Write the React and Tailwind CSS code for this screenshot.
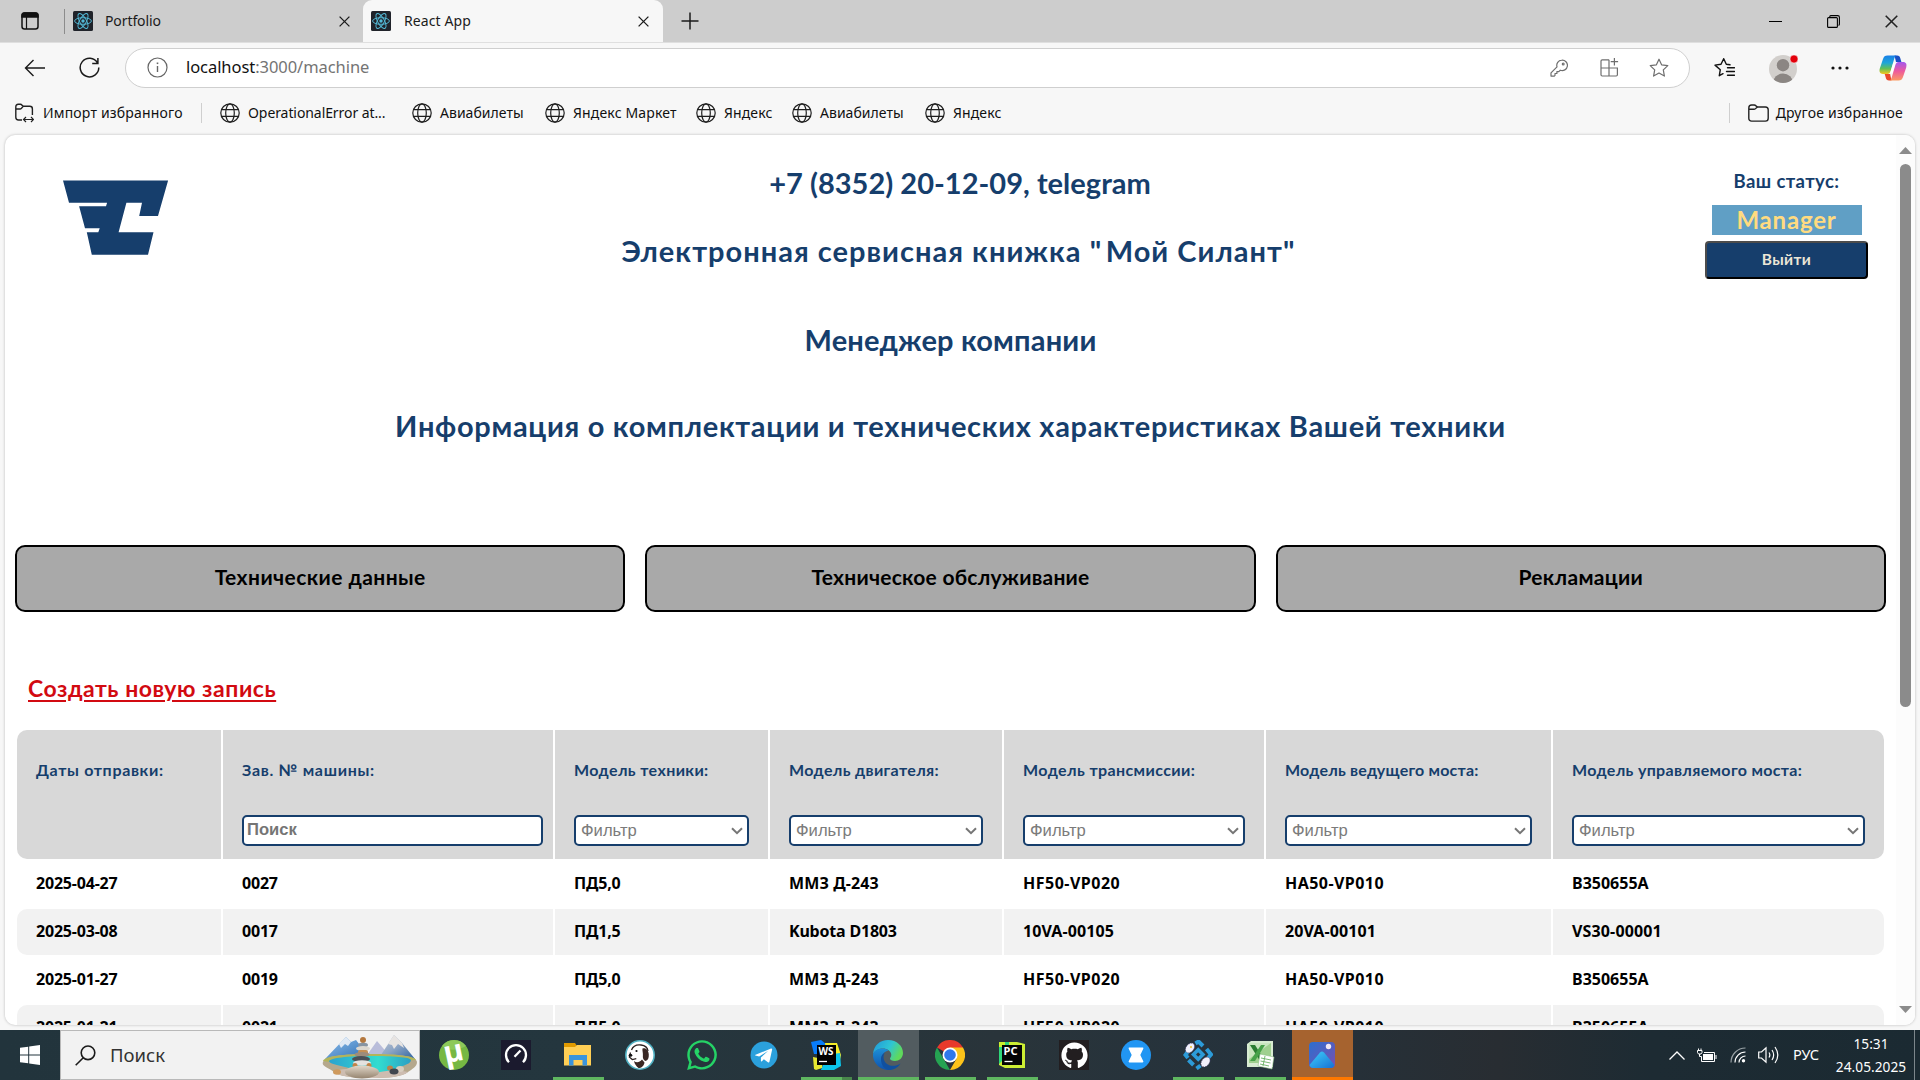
import React from 'react';
import { FaWhatsapp, FaGithub } from 'react-icons/fa';

/* ---------- browser chrome icons ---------- */

function ReactMark() {
  return (
    <svg width="20" height="20" viewBox="0 0 20 20" className="shrink-0">
      <rect width="20" height="20" rx="1.5" fill="#20232a" />
      <g fill="none" stroke="#53b9d6" strokeWidth="0.95">
        <ellipse cx="10" cy="10" rx="8.4" ry="3.3" />
        <ellipse cx="10" cy="10" rx="8.4" ry="3.3" transform="rotate(60 10 10)" />
        <ellipse cx="10" cy="10" rx="8.4" ry="3.3" transform="rotate(120 10 10)" />
      </g>
      <circle cx="10" cy="10" r="1.7" fill="#53b9d6" />
    </svg>
  );
}

function Globe() {
  return (
    <svg width="20" height="20" viewBox="0 0 20 20" className="shrink-0" fill="none" stroke="#1f1f1f" strokeWidth="1.2">
      <circle cx="10" cy="10" r="9.2" />
      <ellipse cx="10" cy="10" rx="4.3" ry="9.2" />
      <path d="M1.6 6.7h16.8M1.6 13.3h16.8" />
    </svg>
  );
}

function Cross({ size = 11, color = '#1b1b1b' }) {
  return (
    <svg width={size} height={size} viewBox="0 0 11 11" className="shrink-0" stroke={color} strokeWidth="1.3">
      <path d="M.6.6l9.8 9.8M10.4.6L.6 10.4" />
    </svg>
  );
}

function Star() {
  return (
    <svg width="20" height="20" viewBox="0 0 20 20" className="shrink-0" fill="none" stroke="#6e6e6e" strokeWidth="1.2" strokeLinejoin="round">
      <path d="M10 1.2l2.6 5.6 6.2.8-4.5 4.3 1.1 6.2L10 15.1l-5.4 3 1.1-6.2L1.2 7.6l6.2-.8z" />
    </svg>
  );
}

function Copilot() {
  return (
    <svg width="28" height="26" viewBox="0 0 28 26" className="shrink-0">
      <defs>
        <linearGradient id="cpA" x1="0" y1="0" x2="0" y2="1">
          <stop offset="0" stopColor="#1a7fe8" />
          <stop offset=".4" stopColor="#1fa6d8" />
          <stop offset=".7" stopColor="#5fbf5a" />
          <stop offset="1" stopColor="#f5c51c" />
        </linearGradient>
        <linearGradient id="cpB" x1="0" y1="0" x2="0" y2="1">
          <stop offset="0" stopColor="#a257ee" />
          <stop offset=".5" stopColor="#ee5a9c" />
          <stop offset="1" stopColor="#fb9a62" />
        </linearGradient>
      </defs>
      <path d="M15.5.5h2.6c2 0 2.7 1 3.2 2.700l1.100 3.800h-5.400z" fill="#1a4fc4" />
      <path d="M12.500 25.500H10c-2 0-2.700-1-3.200-2.700L5.700 19h5.400z" fill="#e9482c" />
      <path d="M8.500.5h9.300c-1.500.3-2 1.400-2.500 3l-3.500 12c-.6 2.100-1.400 3.500-3.600 3.500H4C.8 19 0 16.600.8 13.600L4 4C4.800 1.600 6 .5 8.500.5z" fill="url(#cpA)" />
      <path d="M19.500 25.500h-9.300c1.500-.3 2-1.400 2.500-3l3.500-12C16.800 8.400 17.600 7 19.800 7H24c3.200 0 4 2.400 3.200 5.400L24 22c-.8 2.400-2 3.500-4.500 3.500z" fill="url(#cpB)" />
      <path d="M14.200 8.200h2.300l-3 9.600h-2.300z" fill="#fff" />
    </svg>
  );
}

function TabStrip() {
  return (
    <div className="flex h-[42px] bg-[#cdcdcd]">
      <div className="flex w-[363px] items-center rounded-br-[9px]">
        <svg width="18" height="18" viewBox="0 0 18 18" className="ml-[21px] shrink-0" fill="none" stroke="#111" strokeWidth="1.500">
          <rect x="1" y="1" width="16" height="16" rx="2.500" />
          <path d="M1 4.200C1 2 2 1 3.500 1h11C16 1 17 2 17 4.200V5H1z" fill="#111" />
          <path d="M5.500 5v12" strokeWidth="1.200" />
        </svg>
        <div className="ml-[25px] h-[25px] w-px bg-[#8c8c8c]" />
        <div className="ml-[8px]"><ReactMark /></div>
        <span className="ml-[12px] flex-1 pb-[2px] text-[14px] tracking-[-0.1px] text-[#1b1b1b]">Portfolio</span>
        <div className="mr-[13px]"><Cross /></div>
      </div>
      <div className="flex w-[300px] items-center rounded-t-[9px] bg-[#f7f7f7]">
        <div className="ml-[8px]"><ReactMark /></div>
        <span className="ml-[13px] flex-1 pb-[2px] text-[14px] tracking-[0.1px] text-[#1b1b1b]">React App</span>
        <div className="mr-[14px]"><Cross /></div>
      </div>
      <div className="flex flex-1 items-center rounded-bl-[9px]">
        <svg width="18" height="18" viewBox="0 0 18 18" className="ml-[18px]" stroke="#1b1b1b" strokeWidth="1.500">
          <path d="M9 .5v17M.5 9h17" />
        </svg>
        <div className="ml-auto mr-[22px] flex items-center gap-[45px]">
          <div className="h-px w-[13px] bg-black" />
          <svg width="13" height="13" viewBox="0 0 13 13" fill="none" stroke="#000" strokeWidth="1.100">
            <rect x=".6" y="2.600" width="9.800" height="9.800" rx="1" />
            <path d="M2.800 2.200V1.600c0-.6.4-1 1-1h7c1 0 1.600.6 1.600 1.600v7c0 .6-.4 1-1 1" />
          </svg>
          <Cross size={13} color="#222" />
        </div>
      </div>
    </div>
  );
}

function Toolbar() {
  return (
    <div className="flex h-[49px] items-center">
      <svg width="22" height="18" viewBox="0 0 22 18" className="ml-[24px]" fill="none" stroke="#1b1b1b" strokeWidth="1.400">
        <path d="M21 9H1.500M9.500 1L1.500 9l8 8" />
      </svg>
      <svg width="21" height="21" viewBox="0 0 21 21" className="ml-[33px]" fill="none" stroke="#1b1b1b" strokeWidth="1.500">
        <path d="M18.500 5.800A9.300 9.300 0 1 0 19.800 10.500M18.900 1v5.600h-5.700" />
      </svg>
      <div className="ml-[25px] flex h-[40px] w-[1565px] items-center rounded-full border border-[#cfcfcf] bg-white">
        <svg width="21" height="21" viewBox="0 0 21 21" className="ml-[21px]" fill="none" stroke="#666" strokeWidth="1.200">
          <circle cx="10.500" cy="10.500" r="9.500" />
          <path d="M10.500 9v6" strokeWidth="1.400" />
          <path d="M10.500 5.500v1.600" strokeWidth="1.600" />
        </svg>
        <span className="ml-[18px] text-[16.5px] tracking-[-0.06px] text-[#747474]"><span className="text-[#111]">localhost</span>:3000/machine</span>
        <div className="ml-auto mr-[20px] flex items-center">
          <svg width="18" height="18" viewBox="0 0 18 18" className="mr-[32px]" fill="none" stroke="#6e6e6e" strokeWidth="1.200" strokeLinejoin="round">
            <path d="M11.700 1.200a5.200 5.200 0 1 1-1.400 10L8.800 12.600H6.900v1.900H5v1.900l-.7.700H1v-3.200l6-6a5.200 5.200 0 0 1 4.700-6.700z" />
            <circle cx="13.200" cy="4.900" r=".9" />
          </svg>
          <svg width="19" height="19" viewBox="0 0 19 19" className="mr-[30px]" fill="none" stroke="#6e6e6e" strokeWidth="1.200">
            <path d="M9 1.800H2.200c-.8 0-1.200.4-1.200 1.200v13.800c0 .8.400 1.200 1.200 1.200h14c.8 0 1.200-.4 1.200-1.200V10H1M9 1.800V18M14.400 0v7.400M10.700 3.700h7.400" />
          </svg>
          <Star />
        </div>
      </div>
      <svg width="21" height="20" viewBox="0 0 21 20" className="ml-[24px]" fill="none" stroke="#111" strokeWidth="1.400" strokeLinejoin="round" strokeLinecap="round">
        <path d="M5.300 18.200l1-6L1 7.600l6-.8L9.700 1.200l2.600 5.600 3.700.5M5.300 18.200L9 16.200M13.500 10.200h7M12.500 14h8M13.500 17.800h7" transform="translate(0 -.5)" />
      </svg>
      <svg width="30" height="30" viewBox="0 0 30 30" className="ml-[34px]">
        <defs><clipPath id="av"><circle cx="14" cy="16" r="14" /></clipPath></defs>
        <circle cx="14" cy="16" r="14" fill="#d2cfcc" />
        <g clipPath="url(#av)" fill="#8b8683">
          <circle cx="14" cy="12.200" r="6.200" />
          <path d="M4 30a10 9.500 0 0 1 20 0z" />
        </g>
        <circle cx="25" cy="6" r="4" fill="#e3000b" stroke="#f7f7f7" strokeWidth=".5" />
      </svg>
      <svg width="18" height="4" viewBox="0 0 18 4" className="ml-[32px]" fill="#111">
        <circle cx="2" cy="2" r="1.600" /><circle cx="9" cy="2" r="1.600" /><circle cx="16" cy="2" r="1.600" />
      </svg>
      <div className="ml-[30px]"><Copilot /></div>
    </div>
  );
}

const bookmarks = [
  { label: 'OperationalError at...', gap: 'w-[192px]', track: 'tracking-[-0.08px]' },
  { label: 'Авиабилеты', gap: 'w-[133px]', track: 'tracking-[0.03px]' },
  { label: 'Яндекс Маркет', gap: 'w-[151px]', track: 'tracking-[0.15px]' },
  { label: 'Яндекс', gap: 'w-[96px]', track: 'tracking-[0.1px]' },
  { label: 'Авиабилеты', gap: 'w-[133px]', track: 'tracking-[0.03px]' },
  { label: 'Яндекс', gap: 'w-[96px]', track: 'tracking-[0.1px]' },
];

function BookmarkBar() {
  return (
    <div className="flex h-[41px] items-center whitespace-nowrap text-[14px] text-[#111]">
      <svg width="19" height="20" viewBox="0 0 19 20" className="ml-[15px]" fill="none" stroke="#222" strokeWidth="1.400">
        <path d="M7 17H3.500C1.800 17 .8 16 .8 14.300V4C.8 2.300 1.600 1.300 3.300 1.300h2.200c1.400 0 1.700 2 3.100 2h6.200c1.700 0 2.600.9 2.600 2.600V12M.8 6h4.400c1.800 0 1.800-2.400 3.400-2.700" />
        <path d="M9 16.500h9.200M11 14l-2.500 2.500L11 19M16 14l2.500 2.500L16 19" strokeWidth="1.200" />
      </svg>
      <span className="ml-[9px] w-[158px] tracking-[0.18px]">Импорт избранного</span>
      <div className="h-[20px] w-px bg-[#cfcfcf]" />
      <div className="ml-[18px] flex">
        {bookmarks.map((b, i) => (
          <div key={i} className={`flex items-center ${b.gap}`}>
            <Globe />
            <span className={`ml-[8px] ${b.track}`}>{b.label}</span>
          </div>
        ))}
      </div>
      <div className="ml-auto h-[20px] w-px bg-[#cfcfcf]" />
      <svg width="21" height="18" viewBox="0 0 21 18" className="ml-[18px]" fill="none" stroke="#222" strokeWidth="1.400">
        <path d="M.8 4C.8 2 1.800 1 3.600 1h2.600c1.800 0 2 2 3.600 2h7.600c1.800 0 2.800 1 2.800 2.800v8.400c0 1.800-1 2.900-2.800 2.900H3.600c-1.800 0-2.800-1.100-2.800-2.900zM.8 5.300h5.400c1.700 0 2-2.100 3.600-2.300" />
      </svg>
      <span className="ml-[7px] mr-[17px] tracking-[0.18px]">Другое избранное</span>
    </div>
  );
}

/* ---------- page ---------- */

function CompanyLogo() {
  return (
    <svg width="106" height="75" viewBox="0 0 106 75" className="ml-[58px] mt-[45px]">
      <path
        fill="#163e6c"
        d="M0 .4H105.100L95 36H76.200L79 22.700H63.400L55.600 52.300H90.500L85 74.700H28.800L23.800 52.300H35.300L36.700 48.300H22L16.100 26.300H43L44.100 22.700H6z"
      />
    </svg>
  );
}

function PageHeader() {
  return (
    <header className="grid h-[165px] grid-cols-[1fr_690px_1fr] text-[#163e6c]">
      <CompanyLogo />
      <div className="-mr-[8px] ml-[8px] whitespace-nowrap pt-[30px] text-center text-[29px] font-bold leading-[36px]">
        <p className="ml-[3px] tracking-[0.02px]">+7 (8352) 20-12-09, telegram</p>
        <p className="mt-[32px] tracking-[1.02px]">Электронная сервисная книжка <span className="tracking-[4.6px]">"</span>Мой Силант"</p>
      </div>
      <div className="ml-auto mr-[28px] mt-[31px] flex w-[163px] flex-col items-center font-bold">
        <span className="text-[18.500px] leading-[30px] tracking-[0.4px]">Ваш статус:</span>
        <span className="mt-[9px] h-[30px] w-[150px] bg-[#609fc5] text-center text-[24px] leading-[30px] tracking-[0.8px] text-[#ffdb80]">Manager</span>
        <button className="mt-[6px] h-[38px] w-full rounded-[4px] border-2 border-b-black border-l-[#4c4c4c] border-r-black border-t-[#4c4c4c] bg-[#163e6c] text-[15.500px] tracking-[0.4px] text-[#ebe6d6]">Выйти</button>
      </div>
    </header>
  );
}

const tabs = [
  ['Технические данные', 'tracking-[0.43px]'],
  ['Техническое обслуживание', 'tracking-[0.24px]'],
  ['Рекламации', 'tracking-[0.3px]'],
];

const columns = [
  { title: 'Даты отправки:', control: null, track: 'tracking-[0.66px]' },
  { title: 'Зав. № машины:', control: 'search', track: 'tracking-[0.7px]' },
  { title: 'Модель техники:', control: 'filter', track: 'tracking-[0.38px]' },
  { title: 'Модель двигателя:', control: 'filter', track: 'tracking-[0.35px]' },
  { title: 'Модель трансмиссии:', control: 'filter', track: 'tracking-[0.4px]' },
  { title: 'Модель ведущего моста:', control: 'filter', track: 'tracking-[0.2px]' },
  { title: 'Модель управляемого моста:', control: 'filter', track: 'tracking-[0.33px]' },
];

const rows = [
  ['2025-04-27', '0027', 'ПД5,0', 'ММЗ Д-243', 'HF50-VP020', 'HA50-VP010', 'B350655A'],
  ['2025-03-08', '0017', 'ПД1,5', 'Kubota D1803', '10VA-00105', '20VA-00101', 'VS30-00001'],
  ['2025-01-27', '0019', 'ПД5,0', 'ММЗ Д-243', 'HF50-VP020', 'HA50-VP010', 'B350655A'],
  ['2025-01-21', '0021', 'ПД5,0', 'ММЗ Д-243', 'HF50-VP020', 'HA50-VP010', 'B350655A'],
];

const cellTrack = {
  'ММЗ Д-243': 'tracking-[0.12px]',
  'Kubota D1803': 'tracking-[-0.2px]',
  'HF50-VP020': 'tracking-[0.5px]',
  'HA50-VP010': 'tracking-[0.45px]',
  '10VA-00105': 'tracking-[0.1px]',
  '20VA-00101': 'tracking-[0.1px]',
  'VS30-00001': 'tracking-[0.15px]',
  B350655A: 'tracking-[0px]',
};

const gridCols = 'grid grid-cols-[204px_330px_213px_232px_260px_285px_331px] gap-x-[2px]';

function Filter() {
  return (
    <div className="mr-[19px] flex h-[31px] items-center justify-between rounded-[5px] border-2 border-[#163e6c] bg-white pl-[5px] pr-[4px] font-['Liberation_Sans',Arial,sans-serif] text-[16.600px] text-[#7b7b7b]">
      <span className="leading-[20px]">Фильтр</span>
      <svg width="12" height="8" viewBox="0 0 12 8" fill="none" stroke="#767676" strokeWidth="2">
        <path d="M1 1.200l5 5 5-5" />
      </svg>
    </div>
  );
}

function MachineTable() {
  return (
    <div className="ml-[12px] mt-[27px] w-[1867px] font-bold">
      <div className={`${gridCols} h-[129px] overflow-hidden rounded-[10px]`}>
        {columns.map((c) => (
          <div key={c.title} className="whitespace-nowrap bg-[#d8d8d8] pl-[19px] pt-[29px]">
            <div className={`h-[56px] text-[16px] leading-[22px] text-[#163e6c] ${c.track}`}>{c.title}</div>
            {c.control === 'search' && (
              <div className="mr-[10px] h-[31px] rounded-[5px] border-2 border-[#163e6c] bg-white pl-[3px] font-['Liberation_Sans',Arial,sans-serif] text-[16.600px] leading-[25px] text-[#757575]">Поиск</div>
            )}
            {c.control === 'filter' && <div className="font-normal"><Filter /></div>}
          </div>
        ))}
      </div>
      {rows.map((r, i) => (
        <div key={i} className={`${gridCols} mt-[2px] h-[46px] overflow-hidden rounded-[10px]`}>
          {r.map((v, j) => (
            <div
              key={j}
              className={`whitespace-nowrap pl-[19px] font-['Noto_Sans',sans-serif] text-[16px] leading-[44px] text-black ${cellTrack[v] || 'tracking-[-0.2px]'} ${i % 2 ? 'bg-[#f2f2f2]' : 'bg-white'}`}
            >
              {v}
            </div>
          ))}
        </div>
      ))}
    </div>
  );
}

function Page() {
  return (
    <div className="mx-[5px] flex h-[890px] overflow-hidden rounded-[10px] bg-white shadow-[0_0_3px_rgba(0,0,0,0.25)]">
      <main className="w-[1891px] overflow-hidden font-['Lato','Noto_Sans',sans-serif]">
        <PageHeader />
        <h2 className="mt-[22px] text-center text-[29px] font-bold leading-[36px] tracking-[0.17px] text-[#163e6c]">Менеджер компании</h2>
        <h2 className="mt-[50px] text-center text-[29px] font-bold leading-[36px] tracking-[0.69px] text-[#163e6c]">Информация о комплектации и технических характеристиках Вашей техники</h2>
        <nav className="ml-[10px] mt-[101px] grid h-[67px] w-[1871px] grid-cols-3 gap-[20px]">
          {tabs.map(([label, track]) => (
            <button key={label} className={`rounded-[10px] border-2 border-black bg-[#a9a9a9] pb-[3px] text-[21px] font-bold text-black ${track}`}>{label}</button>
          ))}
        </nav>
        <a className="ml-[23px] mt-[61px] block w-fit text-[23px] font-bold leading-[30px] tracking-[0.54px] text-[#d20a11] underline decoration-2 underline-offset-[3px]">Создать новую запись</a>
        <MachineTable />
      </main>
      <div className="flex w-[19px] flex-col items-center bg-[#fcfcfc] pb-[12px] pr-[1px] pt-[12px]">
        <svg width="13" height="7" viewBox="0 0 13 7" fill="#8b8b8b"><path d="M6.500 0L13 7H0z" /></svg>
        <div className="mt-[10px] h-[543px] w-[11px] rounded-full bg-[#8b8b8b]" />
        <svg width="13" height="7" viewBox="0 0 13 7" fill="#8b8b8b" className="mt-auto"><path d="M0 0h13L6.500 7z" /></svg>
      </div>
    </div>
  );
}

/* ---------- taskbar ---------- */

function SearchArt() {
  return (
    <svg width="96" height="45" viewBox="0 0 96 45" className="ml-auto mr-px mt-[3px]">
      <defs>
        <linearGradient id="mtn" x1="0" y1="0" x2="1" y2="1"><stop offset="0" stopColor="#8fc0ec" /><stop offset="1" stopColor="#2d6db4" /></linearGradient>
        <linearGradient id="mtn2" x1="0" y1="0" x2="1" y2="1"><stop offset="0" stopColor="#c8ccd6" /><stop offset=".5" stopColor="#8ca4c4" /><stop offset="1" stopColor="#2b62a0" /></linearGradient>
        <linearGradient id="lake" x1="0" y1="0" x2="1" y2="0"><stop offset="0" stopColor="#2ba3cf" /><stop offset=".6" stopColor="#33dccf" /><stop offset="1" stopColor="#2c9fc4" /></linearGradient>
        <linearGradient id="stone" x1="0" y1="0" x2="0" y2="1"><stop offset="0" stopColor="#e2d8ca" /><stop offset="1" stopColor="#95846f" /></linearGradient>
      </defs>
      <path d="M45 21l10-14 12 14z" fill="#b9bdda" />
      <path d="M3 25L24 3l5 5 5-2 14 18z" fill="url(#mtn)" />
      <path d="M17 10l7-7 5 5-3 4-3-2-4 4z" fill="#dfe9f5" />
      <path d="M57 24L72 1l8 8 13 16z" fill="url(#mtn2)" />
      <path d="M66 10l6-9 8 8 2 5-6-4-4 5-2-4z" fill="#e7e4e2" />
      <path d="M1 28c2-6 20-8 47-8s47 2 47 8c0 5-5 7-9 10-6 5-20 6-38 6S17 42 12 38C7 34-1 32 1 28z" fill="#b5a88d" />
      <path d="M1 27c2-5 20-7 47-7s45 2 46 6c-9 1-18 0-40 0S14 30 1 27z" fill="#b2b45a" />
      <path d="M7 27c2-3 18-5 41-5s40 1 41 4c0 5-12 6-19 11-10 4-30 3-38-1C25 32 7 31 7 27z" fill="url(#lake)" />
      <path d="M12 38c6-3 12-4 20-2l18 4c12-3 20-5 36-2-6 5-20 6-38 6s-31-2-36-6z" fill="#cdbcb0" />
      <circle cx="41" cy="6" r="3" fill="#b4783e" />
      <ellipse cx="41" cy="11" rx="5" ry="2.200" fill="#8794a2" />
      <ellipse cx="41" cy="14.500" rx="7" ry="2.600" fill="#dcd7cf" />
      <rect x="36" y="16" width="10" height="5" rx="2" fill="#c58f55" />
      <ellipse cx="40" cy="20.500" rx="7.500" ry="2.500" fill="#9d8c7c" />
      <ellipse cx="39" cy="25" rx="9" ry="3" fill="#4b5057" />
      <ellipse cx="40" cy="29" rx="9" ry="2.800" fill="#e4e2df" />
      <circle cx="33" cy="31.500" r="2.500" fill="#c18348" /><circle cx="47" cy="31.500" r="2.500" fill="#c18348" />
      <ellipse cx="40" cy="38" rx="17" ry="6.500" fill="url(#stone)" />
      <ellipse cx="15" cy="38" rx="4" ry="2.800" fill="#cf9a5d" />
      <ellipse cx="68" cy="34" rx="3" ry="2.500" fill="#b9824c" /><ellipse cx="78" cy="35" rx="4" ry="3" fill="#d8cdbf" /><ellipse cx="72" cy="37.500" rx="4.500" ry="3" fill="#41464f" />
    </svg>
  );
}

const Svg = ({ children }) => <svg width="30" height="30" viewBox="0 0 30 30">{children}</svg>;

const UTorrent = () => (
  <Svg>
    <circle cx="15" cy="15" r="15" fill="#76b843" />
    <path d="M3 6a15 15 0 0 1 24 0C20 10 10 12 3 6z" fill="#8dc95a" />
    <text x="15" y="21.500" fontSize="30" fontWeight="700" fill="#fff" textAnchor="middle" fontFamily="Noto Sans, sans-serif" transform="rotate(-12 15 15)">µ</text>
  </Svg>
);
const Speed = () => (
  <Svg>
    <rect width="30" height="30" fill="#1b1a2e" />
    <path d="M8 22.200a10 10 0 1 1 14 0" fill="none" stroke="#fff" strokeWidth="2.300" />
    <path d="M13.500 16.700l6-6.200" stroke="#fff" strokeWidth="2.300" />
  </Svg>
);
const Explorer = () => (
  <Svg>
    <path d="M1 3h11l2 3v4H1z" fill="#e09a00" />
    <path d="M1 7h11l2-2h14v20.500H1z" fill="#ffcf55" />
    <path d="M6 15h18v10.500h-4.500V20h-9v5.500H6z" fill="#3a94dc" />
  </Svg>
);
const Dog = () => (
  <Svg>
    <circle cx="15" cy="15" r="14.200" fill="#fff" stroke="#4fb0c2" strokeWidth="1.600" />
    <path d="M6.500 10C8 6 12 4.500 16 5s6.500 2.500 7 6" fill="none" stroke="#2b2120" strokeWidth="1.300" />
    <path d="M17.500 8.500c3.500-1 6 2 6.300 6 .2 3.500-1 6-3.300 6.500-2-.5-3-3-2.600-6 .2-2.500-.8-4.500-.4-6.500z" fill="#3a2723" />
    <path d="M9 21c2.500 2 5.500 1.500 8-1.500l2.500 3C19 26 16.500 28 13.500 28 11.500 26.500 9.500 24 9 21z" fill="#3a2723" />
    <path d="M5.500 12.500L4.300 17l3 2.500 4-.8" fill="none" stroke="#2b2120" strokeWidth="1.200" />
    <ellipse cx="5.500" cy="15.300" rx="1.800" ry="1.500" fill="#111" /><circle cx="11.500" cy="11" r="1.100" fill="#111" />
  </Svg>
);
const Telegram = () => (
  <Svg>
    <circle cx="15" cy="15" r="13.500" fill="#2ba0dc" />
    <path d="M6 15l16-6.500c.8-.2 1.300.3 1.100 1.200L20.500 21.500c-.2 1-.8 1.200-1.600.7l-4-3-2 2c-.5.500-1 .3-1-.4v-3.200l7.300-6.800-9 5.700L6.300 15.400z" fill="#fff" />
  </Svg>
);
const WebStorm = () => (
  <Svg>
    <path d="M0 2l10-2 5 4v10H3z" fill="#087cfa" />
    <path d="M14 3h12l4 12-2 10-12-5z" fill="#f5ec27" />
    <path d="M16 15l13-2 1 13-7 4H10z" fill="#0cc5ea" />
    <path d="M2 17l10 2-1 9-6 2-2-1z" fill="#e6e831" />
    <rect x="6" y="5" width="19" height="20" fill="#000" />
    <text x="7.500" y="15" fontSize="10" fontWeight="700" fill="#fff" fontFamily="Noto Sans, sans-serif" textLength="15" lengthAdjust="spacingAndGlyphs">WS</text>
    <path d="M8 21.500h8" stroke="#fff" strokeWidth="1.300" />
  </Svg>
);
const Edge = () => (
  <Svg>
    <defs>
      <linearGradient id="edA" x1="0" y1="0" x2="1" y2=".4"><stop offset="0" stopColor="#1f97dc" /><stop offset=".6" stopColor="#2fc5d3" /><stop offset="1" stopColor="#5fd95c" /></linearGradient>
      <linearGradient id="edB" x1="0" y1="0" x2="0" y2="1"><stop offset="0" stopColor="#1d8fd8" /><stop offset="1" stopColor="#0f52ac" /></linearGradient>
    </defs>
    <path d="M0 14C1 5 7 0 15 0c9 0 15 6 15 13 0 5-4 8-8 8-3 0-5-1-5-2.200 0-1 1.300-1.400 1.300-4C18.300 11 14 8.500 10 8.500 5 8.500 1.500 11 0 14z" fill="url(#edA)" />
    <path d="M0 14c1.500-3.500 5-5.500 9.500-5.500 3 0 5 1 6 2C11 11.500 8.500 15 8.500 19c0 5 4 10 9 10.700A15 15 0 0 1 0 14z" fill="url(#edB)" />
    <path d="M12.200 12.500C9.500 15 10 21 14 24c4 3 10 2 13.500-.5C25 27.500 21 30 16 30c-5-.500-8-5.500-8-11 0-3 1.700-5.500 4.200-6.500z" fill="#10509f" />
  </Svg>
);
const Chrome = () => (
  <Svg>
    <path d="M15 15L2 7.500A15 15 0 0 1 28 7.500z" fill="#e8392c" />
    <path d="M2 7.500L8.500 18.800 15 30A15 15 0 0 1 2 7.500z" fill="#25a352" />
    <path d="M28 7.500A15 15 0 0 1 15 30l6.500-11.200L15 7.500z" fill="#fcc31a" />
    <circle cx="15" cy="15" r="7.500" fill="#fff" /><circle cx="15" cy="15" r="5.800" fill="#2f78ec" />
  </Svg>
);
const PyCharm = () => (
  <Svg>
    <path d="M2 2h18l8 2v24H8l-6-3z" fill="#cdee33" />
    <path d="M2 2h10v12L2 24z" fill="#2fd678" />
    <path d="M2 2h6v5H2z" fill="#c9ef2e" />
    <rect x="5" y="5" width="20" height="20" fill="#050505" />
    <text x="6.500" y="15" fontSize="10" fontWeight="700" fill="#fff" fontFamily="Noto Sans, sans-serif" textLength="14" lengthAdjust="spacingAndGlyphs">PC</text>
    <path d="M7.500 21.500h8" stroke="#fff" strokeWidth="1.300" />
  </Svg>
);
const GitHub = () => (
  <div className="flex h-[30px] w-[30px] items-center justify-center bg-[#221e20]"><FaGithub size={27} color="#fff" /></div>
);
const Hourglass = () => (
  <Svg>
    <circle cx="15" cy="15" r="15" fill="#2196f3" />
    <path d="M8.500 7.500h13c.8 0 1 .6.800 1.200L19.300 15l3 6.300c.2.600 0 1.200-.8 1.200h-13c-.8 0-1-.6-.8-1.200l3-6.300-3-6.300c-.2-.6 0-1.200.8-1.200z" fill="#fff" />
  </Svg>
);
const Diamonds = () => (
  <Svg>
    <g fill="none" stroke="#2c9bd8" strokeWidth="4">
      <path d="M10.500 14.500l4.700-4.700 4.700 4.700-4.700 4.700z" strokeWidth="3.600" />
      <path d="M12.500 3.500l3-2L20 6M23.500 9l4.500 5.500-3 3.500M5.500 20l5 5M5 11.500L2.500 15 5 18M13.500 28.500l4-3" />
    </g>
    <g fill="#f1f0fb" stroke="#3f3a6b" strokeWidth=".8" strokeDasharray="1 1">
      <ellipse cx="7" cy="8" rx="5.500" ry="3.800" transform="rotate(-50 7 8)" />
      <ellipse cx="22.500" cy="22" rx="5.500" ry="3.800" transform="rotate(-50 22.500 22)" />
    </g>
    <circle cx="8" cy="7" r="1" fill="#f0c020" />
  </Svg>
);
const Excel = () => (
  <Svg>
    <path d="M2 4l4-3h22v26H2z" fill="#d8ecd2" />
    <path d="M4 3h22v20H4z" fill="#9fd08f" />
    <path d="M4 3h22L4 19z" fill="#c9e6bf" />
    <path d="M5 5h5l10 16h-5z" fill="#2b7d32" /><path d="M16 5h4L10 21H5z" fill="#47a24a" />
    <path d="M15 14l14 3-2 12-14-3z" fill="#fff" stroke="#8cc085" strokeWidth=".6" />
    <path d="M16 18l10 2M15.500 21l10 2M15 24l9 2M20 16l-2 10" stroke="#6bb266" strokeWidth=".9" />
  </Svg>
);
const Photos = () => (
  <Svg>
    <defs>
      <linearGradient id="phA" x1="0" y1="0" x2="1" y2="1"><stop offset="0" stopColor="#2b6fd0" /><stop offset="1" stopColor="#7a4fb0" /></linearGradient>
      <linearGradient id="phB" x1="0" y1="0" x2="1" y2="1"><stop offset="0" stopColor="#3ed0fa" /><stop offset="1" stopColor="#1670d6" /></linearGradient>
    </defs>
    <rect x="2" y="2" width="26" height="26" rx="4" fill="url(#phA)" />
    <path d="M2.500 25L13 12.500c1.300-1.500 2.700-1.500 4 0L27.500 25c-.6 2-2 3-3.500 3H6c-1.500 0-3-1-3.500-3z" fill="url(#phB)" />
    <circle cx="21.500" cy="6.500" r="2.700" fill="#efe8f4" />
  </Svg>
);

const G = 'w-[51px] bg-[#5fb760]';
const apps = [
  { icon: <UTorrent /> },
  { icon: <Speed /> },
  { icon: <Explorer />, bar: G },
  { icon: <Dog /> },
  { icon: <FaWhatsapp size={34} color="#25d366" /> },
  { icon: <Telegram /> },
  { icon: <WebStorm />, bar: 'w-[51px] bg-[linear-gradient(90deg,#5fb760_80%,#48864b_80%)]' },
  { icon: <Edge />, bar: 'w-[61px] bg-[#5fb760]', tile: 'bg-[#525c60]' },
  { icon: <Chrome />, bar: G },
  { icon: <PyCharm />, bar: G },
  { icon: <GitHub /> },
  { icon: <Hourglass /> },
  { icon: <Diamonds />, bar: G },
  { icon: <Excel />, bar: G },
  { icon: <Photos />, bar: 'w-[61px] bg-[#ff7800]', tile: 'bg-[#a6632f]' },
];

function Taskbar() {
  return (
    <div className="flex h-[50px] bg-[linear-gradient(90deg,#22343c_0%,#24363e_30%,#29343a_52%,#25323c_66%,#282d32_78%,#1d2b33_86%,#1b2a32_100%)]">
      <div className="flex w-[60px] items-center justify-center">
        <svg width="20" height="20" viewBox="0 0 20 20" fill="#fff">
          <path d="M0 2.800L8.200 1.700v7.800H0zM9.200 1.500L20 0v9.500H9.200zM0 10.500h8.200v7.800L0 17.200zM9.200 10.500H20V20L9.200 18.500z" />
        </svg>
      </div>
      <div className="flex w-[360px] items-center border border-[#b9b9b9] bg-[#f2f2f2]">
        <svg width="21" height="21" viewBox="0 0 21 21" className="ml-[14px]" fill="none" stroke="#1b1b1b" strokeWidth="1.600">
          <circle cx="13" cy="7.800" r="6.800" /><path d="M8.300 12.700L.7 20.300" />
        </svg>
        <span className="ml-[14px] text-[18.500px] text-[#333]">Поиск</span>
        <SearchArt />
      </div>
      <div className="ml-[3px] flex">
        {apps.map((a, i) => (
          <div key={i} className="flex w-[62px] justify-center">
            <div className={`flex w-[61px] flex-col items-center ${a.tile || ''}`}>
              <div className="flex h-[47px] items-center pt-[3px]">{a.icon}</div>
              <div className={`h-[3px] ${a.bar || ''}`} />
            </div>
          </div>
        ))}
      </div>
      <div className="ml-auto flex items-center text-white">
        <svg width="16" height="9" viewBox="0 0 16 9" fill="none" stroke="#fff" strokeWidth="1.300"><path d="M.5 8.500L8 1l7.500 7.500" /></svg>
        <svg width="20" height="15" viewBox="0 0 20 15" className="ml-[12px]" fill="none" stroke="#fff">
          <path d="M2.500 6v2.500h2M4.500 8.500v5h13v-9h-10.500" />
          <rect x="6" y="6" width="10" height="6" fill="#fff" stroke="none" />
          <path d="M19 7v4M1.500.5v2M4 .5v2M.5 2.500h4.500v2L4 6H1.500L.5 4.500z" />
        </svg>
        <svg width="16" height="16" viewBox="0 0 16 16" className="ml-[13px]" fill="none" stroke="#fff" strokeWidth="1.200">
          <path d="M1 15.500A14.500 14.500 0 0 1 15.500 1" stroke="#9aa3a7" />
          <path d="M5 15.500A10.500 10.500 0 0 1 15.500 5M9 15.500A6.500 6.500 0 0 1 15.500 9" />
          <circle cx="13.500" cy="13.700" r="1.700" fill="#fff" stroke="none" />
        </svg>
        <svg width="21" height="18" viewBox="0 0 21 18" className="ml-[12px]" fill="none" stroke="#fff" strokeWidth="1.200">
          <path d="M.7 6h2.800L8 1.800v14.400L3.500 12H.7zM11 6.500c1 1.500 1 3.500 0 5M14 4c2 3 2 7 0 10M17 1c3.500 5 3.500 11 0 16" />
        </svg>
        <span className="ml-[14px] w-[42px] text-[14.500px]">РУС</span>
        <div className="w-[72px] text-center text-[13.700px] leading-[23px] tracking-[0.03px]">
          <div>15:31</div>
          <div>24.05.2025</div>
        </div>
        <div className="ml-[7px] mr-[5px] h-[50px] w-px bg-[#7c868b]" />
      </div>
    </div>
  );
}

export default function App() {
  return (
    <div className="flex h-[1080px] w-[1920px] flex-col overflow-hidden bg-[#f7f7f7] font-['Noto_Sans',sans-serif]">
      <TabStrip />
      <div className="h-px bg-[#dfdfdf]" />
      <Toolbar />
      <BookmarkBar />
      <div className="pt-[2px]"><Page /></div>
      <div className="h-[5px]" />
      <Taskbar />
    </div>
  );
}
